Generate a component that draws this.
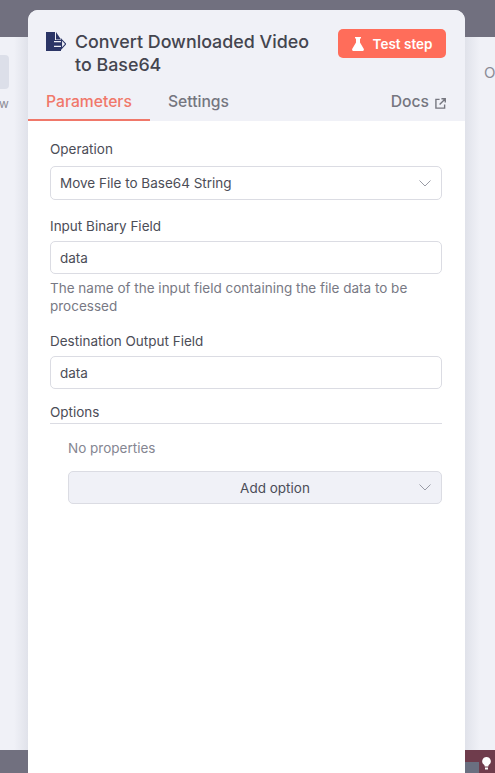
<script>
  let fields = ['data'];
</script>

<div class="page">
  <div class="top-bar"></div>
  <div class="canvas">
    <div class="left-side">
      <div class="node-stub"></div>
      <span class="stub-label">w</span>
    </div>
    <div class="right-side"><span>O</span></div>
  </div>
  <div class="bottom-bar">
    <div class="bottom-right">
      <div class="bin"></div>
      <svg class="bulb" viewBox="0 0 9 13" width="9" height="13">
        <path d="M4.500 0a4.300 4.300 0 0 0-2.500 7.800c.5.400.7 1 .7 1.700h3.600c0-.7.200-1.300.7-1.700A4.300 4.300 0 0 0 4.500 0z" fill="#fff"/>
        <rect x="3" y="10.500" width="3" height="2" fill="#fff"/>
      </svg>
    </div>
  </div>

  <div class="panel">
    <header class="head">
      <div class="title-row">
        <svg class="node-icon" viewBox="0 0 20 19" width="20" height="19">
          <path d="M0 0h9v8h6v11H0z" fill="#2b3566"/>
          <path d="M10 0l5 7.500h-5z" fill="#2b3566"/>
          <path d="M8 9.600h7.500M8 14.400h7.500" fill="none" stroke="#f0f1f7" stroke-width="1.200"/>
          <path d="M15.500 7.500L19.600 12l-4.100 4.500z" fill="#f0f1f7" stroke="#2b3566" stroke-width="1.100"/>
        </svg>
        <h1>Convert Downloaded Video to Base64</h1>
        <button class="test-btn">
          <svg viewBox="0 0 12 14" width="12" height="14">
            <path d="M3 0h6v1.500H8v4l3.700 6.200c.5.900 0 2.300-1.200 2.300H1.500C.3 14-.2 12.600.3 11.700L4 5.500v-4H3z" fill="#fff"/>
          </svg>
          Test step
        </button>
      </div>
      <nav class="tabs">
        <span class="tab active">Parameters</span>
        <span class="tab">Settings</span>
        <span class="tab docs">
          Docs
          <svg viewBox="0 0 12 12" width="11" height="11">
            <path d="M5 1.500H1v9.500h9.500V7M7 .8h4.200V5M11 1L5 7" fill="none" stroke="currentColor" stroke-width="1.500"/>
          </svg>
        </span>
      </nav>
    </header>

    <div class="body">
      <div class="field">
        <div class="label first">Operation</div>
        <div class="input select">
          <span>Move File to Base64 String</span>
          <svg viewBox="0 0 12 7" width="12" height="7"><path d="M.5.5L6 6l5.500-5.500" fill="none" stroke="#9a9ca6" stroke-width="1"/></svg>
        </div>
      </div>
      <div class="field spaced">
        <div class="label">Input Binary Field</div>
        <div class="input">{fields[0]}</div>
        <p class="hint">The name of the input field containing the file data to be processed</p>
      </div>
      <div class="field spaced">
        <div class="label">Destination Output Field</div>
        <div class="input">{fields[0]}</div>
      </div>
      <div class="options-title">Options</div>
      <div class="options">
        <div class="none">No properties</div>
        <div class="input add">
          <span>Add option</span>
          <svg viewBox="0 0 12 7" width="12" height="7"><path d="M.5.5L6 6l5.500-5.500" fill="none" stroke="#9a9ca6" stroke-width="1"/></svg>
        </div>
      </div>
    </div>
  </div>
</div>

<style>
  :global(body) {
    font-family: Inter, "Liberation Sans", sans-serif;
    overflow: hidden;
  }

  .page {
    position: relative;
    width: 495px;
    height: 773px;
    display: flex;
    flex-direction: column;
    overflow: hidden;
    background: #f0f1f7;
  }

  .top-bar {
    height: 37px;
    background: #71707f;
  }

  .canvas {
    flex: 1;
    display: flex;
    justify-content: space-between;
  }

  .left-side {
    width: 28px;
    padding-top: 18px;
    overflow: hidden;
    background: linear-gradient(90deg, #f0f1f7 50%, #e0e2ea 100%);
  }

  .node-stub {
    width: 9px;
    height: 34px;
    border-radius: 0 4px 4px 0;
    background: #dcdfe9;
  }

  .stub-label {
    display: block;
    margin-top: 7px;
    margin-left: -1px;
    font-size: 12px;
    color: #8a8b96;
  }

  .right-side {
    width: 30px;
    padding: 26px 0 0 19px;
    box-sizing: border-box;
    overflow: hidden;
    font-size: 15px;
    color: #8a8b96;
    background: linear-gradient(270deg, #f0f1f7 50%, #e0e2ea 100%);
  }

  .bottom-bar {
    height: 23px;
    background: #71707f;
    display: flex;
    justify-content: flex-end;
  }

  .bottom-right {
    width: 30px;
    display: flex;
    justify-content: space-between;
    align-items: flex-end;
    background: #6f3c4c;
  }

  .bin {
    width: 14px;
    height: 11px;
    background: #6a6f80;
  }

  .bulb {
    margin-right: 4px;
    margin-bottom: 3px;
  }

  /* the node panel sits over the canvas */
  .panel {
    position: absolute;
    left: 28px;
    top: 10px;
    width: 437px;
    height: 780px;
    border-radius: 10px 10px 0 0;
    background: #fff;
    display: flex;
    flex-direction: column;
  }

  .head {
    height: 111px;
    box-sizing: border-box;
    padding: 19px 19px 0 18px;
    background: #f0f1f7;
    border-radius: 10px 10px 0 0;
    display: flex;
    flex-direction: column;
  }

  .title-row {
    display: flex;
    align-items: flex-start;
    height: 61px;
  }

  .node-icon {
    flex: none;
    margin-top: 3px;
    margin-right: 9px;
  }

  h1 {
    margin: 0;
    flex: 1;
    font-size: 17.850px;
    font-weight: 500;
    line-height: 23px;
    color: #44454f;
    padding: 1px 20px 0 0;
  }

  .test-btn {
    flex: none;
    width: 108px;
    height: 29px;
    border: 0;
    border-radius: 5px;
    background: #ff6d5a;
    color: #fff;
    font: 600 13.500px Inter, sans-serif;
    display: flex;
    align-items: center;
    justify-content: center;
    gap: 9px;
  }

  .tabs {
    display: flex;
    align-items: stretch;
    height: 31px;
    margin-left: -18px;
  }

  .tab {
    font-size: 15.700px;
    font-weight: 500;
    color: #75767f;
    padding: 2px 18px 0;
  }

  .tab.active {
    color: #f0786a;
    border-bottom: 2px solid #f0786a;
  }

  .docs {
    margin-left: auto;
    padding-right: 0;
    display: flex;
    align-items: flex-start;
    gap: 6px;
  }

  .docs svg {
    margin-top: 6px;
  }

  .body {
    padding: 20px 23px 0 22px;
  }

  .field {
    display: flex;
    flex-direction: column;
  }

  .spaced {
    margin-top: 18px;
  }

  .label {
    font-size: 13.500px;
    line-height: 17px;
    color: #4c4d57;
    margin-bottom: 6px;
  }

  .label.first {
    margin-bottom: 8px;
  }

  .input {
    box-sizing: border-box;
    height: 33px;
    border: 1px solid #dbdce3;
    border-radius: 5px;
    padding: 0 10px 0 9px;
    font-size: 13.500px;
    color: #4c4d57;
    display: flex;
    align-items: center;
    justify-content: space-between;
  }

  .select {
    height: 34px;
  }

  .hint {
    margin: 5px 0 0;
    font-size: 13.500px;
    line-height: 18px;
    color: #787984;
  }

  .options-title {
    margin-top: 15px;
    font-size: 13.500px;
    line-height: 17px;
    color: #4c4d57;
    padding-bottom: 2px;
    border-bottom: 1px solid #dbdce3;
  }

  .options {
    padding: 16px 0 0 18px;
  }

  .none {
    font-size: 13.500px;
    line-height: 17px;
    color: #858692;
  }

  .add {
    position: relative;
    margin-top: 14px;
    padding-left: 50px;
    background: #f0f1f7;
    justify-content: center;
  }

  .add svg {
    position: absolute;
    right: 10px;
    top: 12px;
  }
</style>
